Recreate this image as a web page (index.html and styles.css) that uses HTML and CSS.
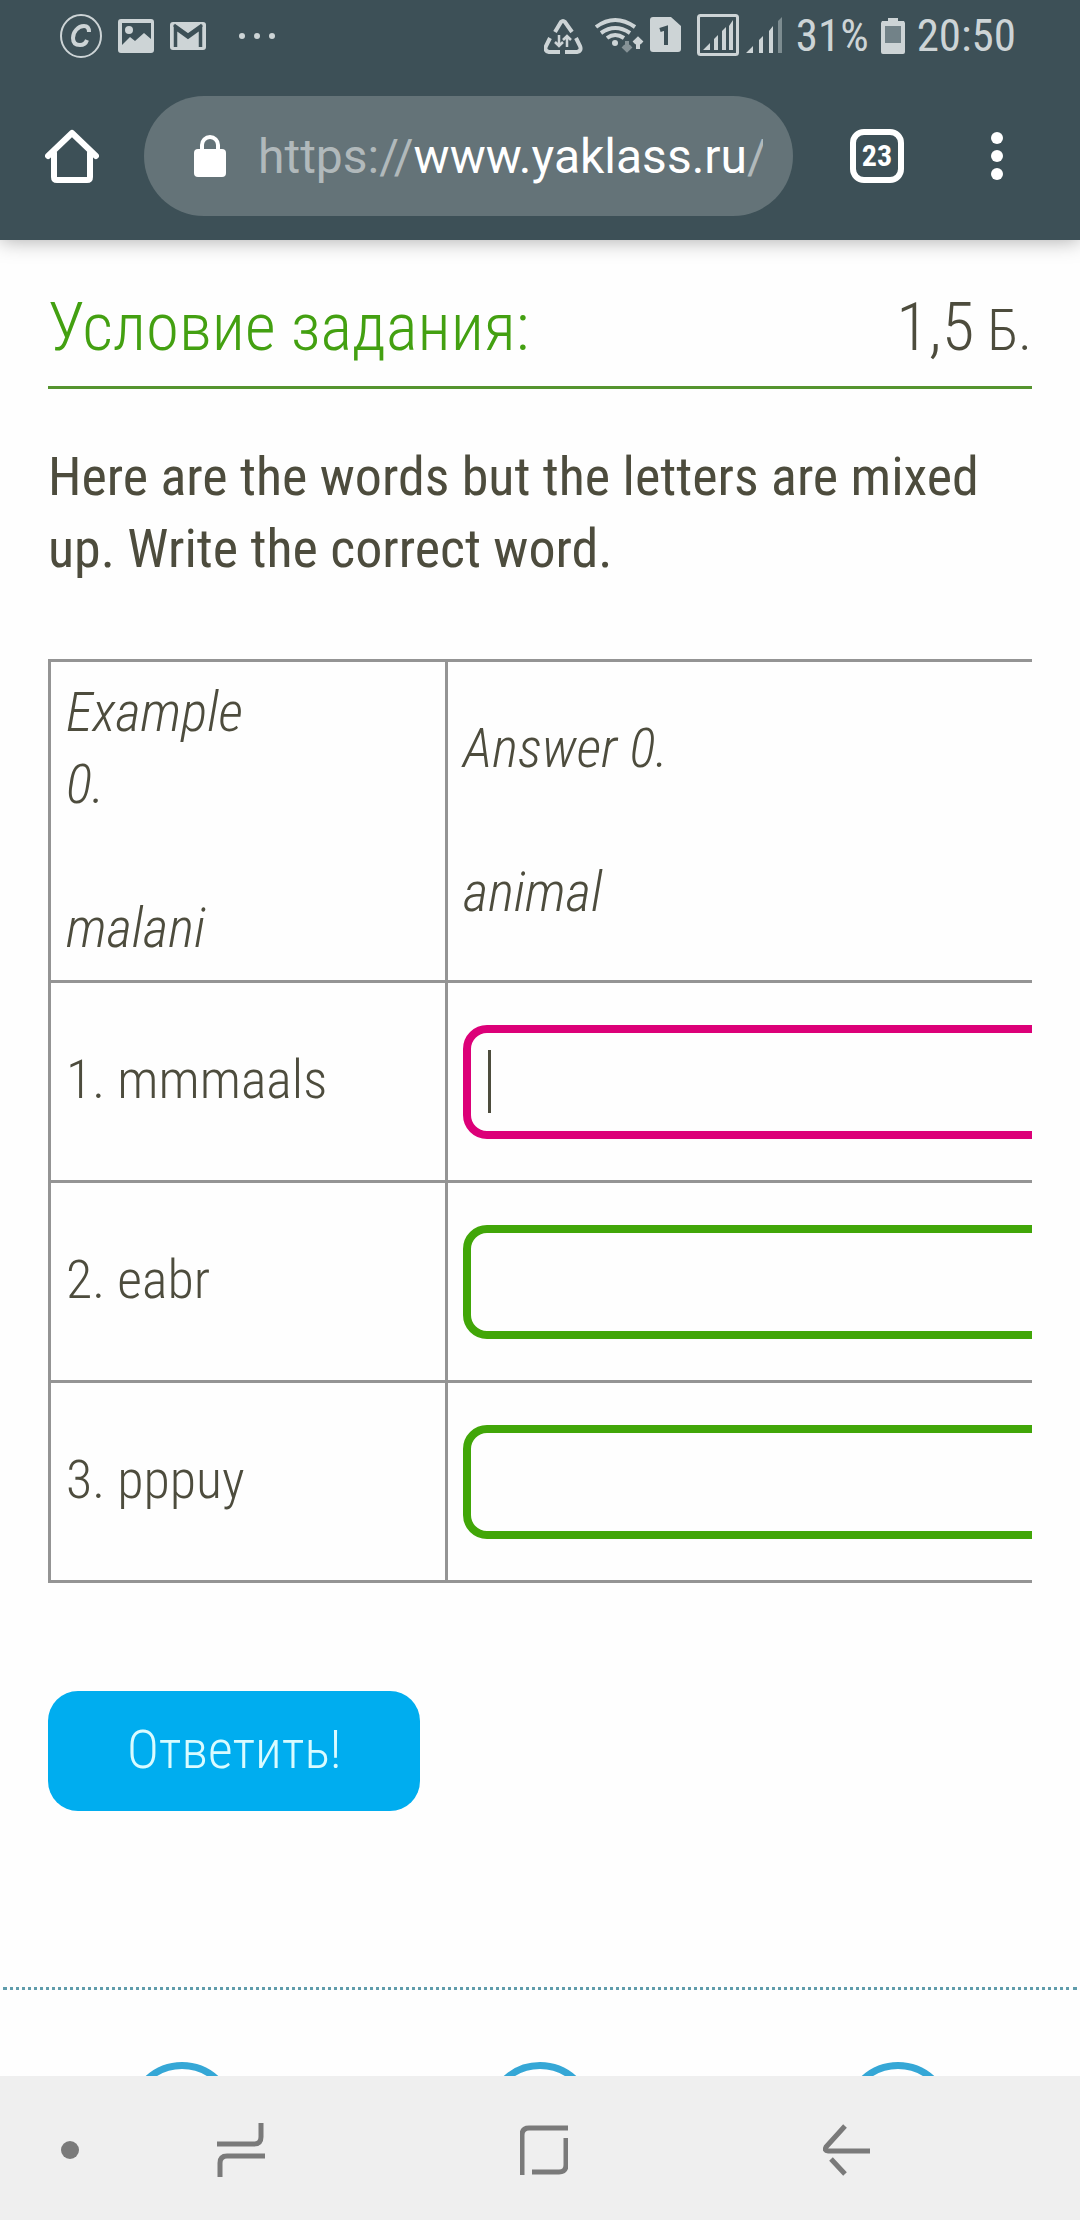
FILE: index.html
```html
<!DOCTYPE html>
<html lang="ru">
<head>
<meta charset="utf-8">
<meta name="viewport" content="width=device-width, initial-scale=1">
<title>Условие задания</title>
<link rel="stylesheet" href="styles.css">
</head>
<body>
<div class="phone">
  <header class="top">
    <div class="status">
      <div class="status-left">
        <svg width="42" height="44" viewBox="0 0 42 44"><ellipse cx="21" cy="22" rx="20" ry="21" fill="none" stroke="currentColor" stroke-width="2"/><path d="M29 18c0-4-2-6-5-6-6 0-11 6-11 12 0 5 3 7 7 7 3 0 6-2 7-5" fill="none" stroke="currentColor" stroke-width="4"/></svg>
        <svg width="36" height="34" viewBox="0 0 36 34"><path fill="currentColor" fill-rule="evenodd" d="M3 0h30a3 3 0 0 1 3 3v28a3 3 0 0 1-3 3H3a3 3 0 0 1-3-3V3a3 3 0 0 1 3-3ZM4 4v22l8-8 5 4 9-8 7 6V4Z"/><circle cx="11" cy="11" r="4" fill="currentColor"/></svg>
        <svg width="36" height="28" viewBox="0 0 36 28"><rect width="36" height="28" rx="3" fill="currentColor"/><path d="M5.500 25V6L18 15 30.500 6v19" fill="none" stroke="#3d5057" stroke-width="3.500"/><path d="M4 3l14 10L32 3" fill="none" stroke="#3d5057" stroke-width="3"/></svg>
        <svg class="more" width="38" height="6" viewBox="0 0 38 6" fill="currentColor"><circle cx="4" cy="3" r="3"/><circle cx="19" cy="3" r="3"/><circle cx="34" cy="3" r="3"/></svg>
      </div>
      <div class="status-right">
        <svg width="238" height="44" viewBox="543 14 238 44" fill="none" stroke="currentColor">
          <g stroke-width="4"><path d="M554 32l6-10q2-2 4 0l7 10M549 38l-4 8q-2 5 3 6h11M575 38l4 8q2 5-3 6h-12"/></g>
          <g stroke-width="2.500"><path d="M558 35v11m-4-4 4 4 4-4M566 47V36m-4 4 4-4 4 4"/></g>
          <g stroke-width="4"><path d="M595 27q19-14 39 0M600 33q14-10 29 0M606 38q8-6 17 0"/></g>
          <circle cx="614" cy="43" r="3" fill="currentColor" stroke="none"/>
          <path d="M626 41v9m-4-4 4 4 4-4" stroke-width="4" opacity=".5"/><path d="M637 49V39m-4 4 4-4 4 4" stroke-width="4"/>
          <path d="M652 17h18l10 9v23q0 3-3 3h-25q-3 0-3-3V20q0-3 3-3Z" fill="currentColor" stroke="none"/>
          <path d="M659 30l6-2v17" stroke="#3d5057" stroke-width="4"/>
          <rect x="697.500" y="15.500" width="39" height="39" rx="2" stroke-width="3"/>
          <g fill="currentColor" stroke="none"><path d="M702 50l7-7v7ZM713 39l4-4v15h-4ZM721 31l4-4v23h-4ZM728 26l4-6v30h-4ZM745 53l7-7v7ZM758 40l4-4v17h-4ZM768 31l4-5v27h-4Z"/><path d="M777 21l4-4v36h-4Z" opacity=".45"/></g>
        </svg>
        <span class="battery-text">31%</span>
        <svg class="battery" width="24" height="36" viewBox="0 0 24 36"><path fill="currentColor" d="M7 0h10v3h6l1 2v29q0 2-2 2H2q-2 0-2-2V5l1-2h6Z"/><path fill="#728288" d="M4 8h16v17H4Z"/></svg>
        <span class="clock">20:50</span>
      </div>
    </div>
    <div class="toolbar">
      <button class="icon-button" aria-label="Home"><svg width="54" height="54" viewBox="0 0 54 54" fill="none" stroke="#fff" stroke-width="6" stroke-linecap="round" stroke-linejoin="round"><path d="M3 27 27 4l24 23"/><path d="M9 24v24q0 3 3 3h30q3 0 3-3V24" /></svg></button>
      <button class="address"><svg width="32" height="42" viewBox="0 0 32 42"><rect y="14" width="32" height="28" rx="4" fill="#fff"/><path d="M8 16v-6a8 8 0 0 1 16 0v6" fill="none" stroke="#fff" stroke-width="4"/></svg><span class="url">https://<span class="host">www.yaklass.ru</span>/</span></button>
      <button class="tabs">23</button>
      <button class="icon-button" aria-label="Menu"><svg width="12" height="48" viewBox="0 0 12 48" fill="#fff"><circle cx="6" cy="6" r="6"/><circle cx="6" cy="24" r="6"/><circle cx="6" cy="42" r="6"/></svg></button>
    </div>
  </header>

  <main class="page">
    <section class="task">
      <div class="task-head">
        <h1 class="title">Условие задания:</h1>
        <span class="points">1,5<small class="unit"> Б.</small></span>
      </div>
      <p class="question">Here are the words but the letters are mixed up. Write the correct word.</p>
      <div class="scroller">
        <table class="words">
          <tr class="example"><td>Example<br>0.<br><br>malani</td><td>Answer 0.<br><br>animal</td></tr>
          <tr><td><label class="word" for="w1">1. mmmaals</label></td><td><input class="answer current" id="w1" type="text"></td></tr>
          <tr><td><label class="word" for="w2">2. eabr</label></td><td><input class="answer" id="w2" type="text"></td></tr>
          <tr><td><label class="word" for="w3">3. pppuy</label></td><td><input class="answer" id="w3" type="text"></td></tr>
        </table>
      </div>
      <button class="submit">Ответить!</button>
    </section>
    <div class="steps"><span class="step"></span><span class="step"></span><span class="step"></span></div>
  </main>

  <nav class="system">
    <svg class="dot" width="18" height="18" viewBox="0 0 18 18"><circle cx="9" cy="9" r="9" fill="#7a7a7a"/></svg>
    <button class="key" aria-label="Recent apps"><svg width="48" height="54" viewBox="0 0 48 54"><path d="M0 21h37q7 0 7-7V0M48 33H10q-7 0-7 7v14"/></svg></button>
    <button class="key" aria-label="Home screen"><svg width="48" height="50" viewBox="0 0 48 50"><path d="M2 50V10q0-7 7-7h39M46 13v27q0 7-7 7H12"/></svg></button>
    <button class="key" aria-label="Back"><svg width="48" height="54" viewBox="0 0 48 54"><path d="M22 3 3 24q-2 4 2 4h42M8 36l14 15"/></svg></button>
  </nav>
</div>
</body>
</html>
```
FILE: styles.css
```css
* {
  box-sizing: border-box;
}

body {
  margin: 0;
  background: #fefefe;
  color: #4d4c3d;
  font-family: "Roboto Condensed", Roboto, sans-serif;
  font-weight: 300;
  font-size: 54px;
  line-height: 72px;
}

button {
  border: 0;
  padding: 0;
  background: none;
  font: inherit;
}

svg {
  display: block;
  flex: none;
}

.phone {
  display: flex;
  flex-direction: column;
  height: 100vh;
}

.top {
  position: relative;
  background: #3d5057;
  box-shadow: 0 0 20px rgba(0, 0, 0, 0.35);
}

.status {
  display: flex;
  justify-content: space-between;
  height: 72px;
  padding: 0 64px 0 60px;
  color: #cdd4d6;
  font-weight: 400;
  font-size: 45px;
}

.status-left,
.status-right {
  display: flex;
  align-items: center;
}

.status-left {
  gap: 16px;
}

.more {
  margin-left: 16px;
}

.battery-text {
  margin-left: 14px;
}

.battery {
  margin: 0 12px;
}

.toolbar {
  display: flex;
  align-items: center;
  height: 168px;
  padding: 0 77px 0 45px;
}

.address {
  display: flex;
  flex: 1;
  align-items: center;
  gap: 32px;
  min-width: 0;
  height: 120px;
  margin: 0 57px 0 45px;
  padding: 0 30px 0 50px;
  border-radius: 60px;
  background: #647378;
}

.url {
  overflow: hidden;
  padding-top: 2px;
  color: #b1b9bb;
  font-family: Roboto, sans-serif;
  font-weight: 400;
  font-size: 48px;
  white-space: nowrap;
}

.host {
  color: #fff;
}

.tabs {
  width: 54px;
  height: 54px;
  margin-right: 87px;
  border: 6px solid #fff;
  border-radius: 14px;
  color: #fff;
  font-weight: 700;
  font-size: 30px;
  line-height: 42px;
}

.page {
  flex: 1;
  min-height: 0;
  overflow: hidden;
}

.task {
  padding: 48px 48px 176px;
}

.task-head {
  display: flex;
  align-items: baseline;
  justify-content: space-between;
  padding-bottom: 16px;
  border-bottom: 3px solid #55942f;
  font-size: 67px;
  line-height: 78px;
}

.title {
  margin: 0;
  color: #43a011;
  font: inherit;
}

.unit {
  font-size: 57px;
}

.question {
  margin: 0;
  padding: 52px 0 74px;
  font-weight: 400;
}

.scroller {
  overflow: hidden;
}

.words {
  width: 1200px;
  border-collapse: collapse;
  table-layout: fixed;
}

.words td {
  height: 200px;
  padding: 15px;
  border: 3px solid #949494;
}

.words td:first-child {
  width: 397px;
}

.words .example td {
  padding: 14px 15px 16px;
  font-size: 55px;
  font-style: italic;
}

.word {
  display: block;
  padding-bottom: 4px;
}

.answer {
  display: block;
  width: 100%;
  height: 114px;
  padding: 0 16px;
  border: 8px solid #41a608;
  border-radius: 24px;
  outline: 0;
  background: #fefefe;
  color: inherit;
  font: inherit;
}

/* The answer that is being typed, with its text cursor */
.current {
  border-color: #dc0078;
  background: linear-gradient(#4d4c3d, #4d4c3d) 17px center / 3px 63px no-repeat #fefefe;
}

.submit {
  display: block;
  margin-top: 108px;
  padding: 23px 79px 25px;
  border-radius: 30px;
  background: #00adef;
  color: #d9fbff;
}

.steps {
  display: flex;
  justify-content: space-around;
  margin: 0 3px;
  padding-top: 72px;
  border-top: 3px dotted #5f9cab;
}

.step {
  width: 108px;
  height: 108px;
  border: 7px solid #35a7d6;
  border-radius: 50%;
}

.system {
  display: flex;
  flex: none;
  align-items: center;
  height: 144px;
  padding: 4px 209px 0 61px;
  background: #efefef;
}

.dot {
  margin-right: 138px;
}

.key {
  stroke: #7a7a7a;
  stroke-width: 5px;
  fill: none;
}

.key + .key {
  margin-left: auto;
}
```
